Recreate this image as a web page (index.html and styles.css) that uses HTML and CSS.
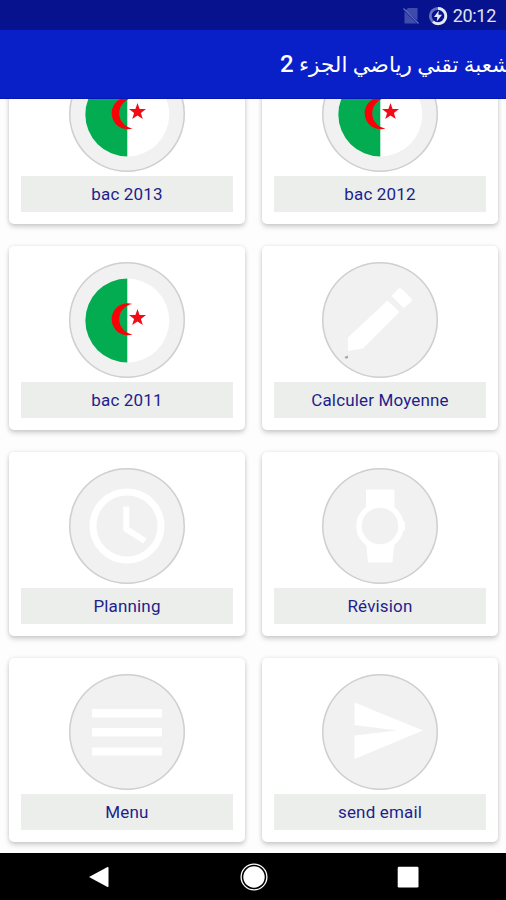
FILE: index.html
```
<!DOCTYPE html>
<html lang="fr">
<head>
<meta charset="utf-8">
<title>Bac</title>
<link rel="stylesheet" href="styles.css">
</head>
<body>
<svg class="defs" width="0" height="0">
  <symbol id="flag" viewBox="0 0 116 116">
    <circle cx="58.3" cy="58.500" r="42" fill="#fff"/>
    <path d="M58.3 16.500a42 42 0 0 0 0 84z" fill="#04ac51"/>
    <path d="M63.5 42a16 16 0 1 0 0 30.5a15.4 15.4 0 0 1 0-30.5z" fill="#fb0007"/>
    <path d="M68.5 47l2.100 6 6.400.1-5.100 3.900 1.900 6.100-5.300-3.600-5.300 3.600 1.900-6.100-5.100-3.900 6.400-.1z" fill="#f10b17"/>
  </symbol>
</svg>
<div class="screen">
  <div class="status">
    <svg class="nosim" width="17" height="18" viewBox="0 0 17 18">
      <path d="M5 1h9.500v12.500L2.500 3.500zM1.500 4.500L14 16.500H1.500z" fill="#3f4cab"/>
      <path d="M.5 1.500L15.500 16.500" stroke="#626ebd" stroke-width="1.300"/>
    </svg>
    <svg class="battery" width="20" height="20" viewBox="0 0 20 20" fill="none">
      <circle cx="10" cy="10" r="7.700" stroke="#6671bd" stroke-width="2.800"/>
      <path d="M10 2.300a7.700 7.700 0 1 1-5 13.500" stroke="#e7e9f6" stroke-width="2.800"/>
      <path d="M10.800 4.500L6 11h3.300L8.800 15.500 14 8.800h-3.600z" fill="#e7e9f6"/>
    </svg>
    <span class="clock">20:12</span>
  </div>
  <header class="appbar"><span class="title" lang="ar">شعبة تقني رياضي الجزء <span class="part">2</span></span></header>
  <main class="content">
    <div class="grid">
      <div class="card"><div class="disc"><svg><use href="#flag"/></svg></div><div class="label">bac 2013</div></div>
      <div class="card"><div class="disc"><svg><use href="#flag"/></svg></div><div class="label">bac 2012</div></div>
      <div class="card"><div class="disc"><svg><use href="#flag"/></svg></div><div class="label">bac 2011</div></div>
      <div class="card"><div class="disc"><svg viewBox="0 0 116 116" fill="#fff">
        <path d="M26 89V75.500L65.500 38.500 77.500 50 41 86.500zM69.500 34L76 27q2-1.500 4 0l9 9q1.500 2 0 4l-7.500 6z"/>
        <path d="M22.500 95l3-1.500.7 2.500-2.200.8z" fill="#a5a5a5"/>
      </svg></div><div class="label">Calculer Moyenne</div></div>
      <div class="card"><div class="disc"><svg viewBox="0 0 116 116" fill="none" stroke="#fff">
        <circle cx="58" cy="58" r="34" stroke-width="7"/>
        <path d="M57.300 38.500V61L76 73" stroke-width="6"/>
      </svg></div><div class="label">Planning</div></div>
      <div class="card"><div class="disc"><svg viewBox="0 0 116 116">
        <path d="M44 21.500h28.500V42h-28.500zM44 74h28.500l-2 20.500H46z" fill="#fff"/>
        <circle cx="58" cy="58" r="21" fill="#f1f1f1" stroke="#fff" stroke-width="5.500"/>
        <path d="M80.500 52.500l2.500 2v7l-2.500 2z" fill="#fff"/>
      </svg></div><div class="label">Révision</div></div>
      <div class="card"><div class="disc"><svg viewBox="0 0 116 116" fill="#fff">
        <rect x="23" y="35" width="70" height="8.500" rx="1"/>
        <rect x="23" y="54" width="70" height="8.500" rx="1"/>
        <rect x="23" y="73.500" width="70" height="8" rx="1"/>
      </svg></div><div class="label">Menu</div></div>
      <div class="card"><div class="disc"><svg viewBox="0 0 116 116" fill="#fff">
        <path d="M32.500 28.500L101 56.500 32.500 85V61.500L75 56.500 32.500 51z"/>
      </svg></div><div class="label">send email</div></div>
    </div>
  </main>
  <nav class="navbar">
    <svg viewBox="0 0 24 24"><path d="M2 12L20.500 2q1-.4 1 .7v18.600q0 1.100-1 .7z"/></svg>
    <svg class="home" viewBox="0 0 28 28"><circle cx="14" cy="14" r="10.700"/><circle cx="14" cy="14" r="12.900" fill="none" stroke="#fff" stroke-width="1.300"/></svg>
    <svg viewBox="0 0 24 24"><rect x="1.700" y="1.700" width="20.800" height="20.800" rx="1.300"/></svg>
  </nav>
</div>
</body>
</html>
```

FILE: styles.css
```
* { box-sizing: border-box; }
body { margin: 0; font-family: Roboto, sans-serif; }
.defs { display: none; }
.screen { width: 506px; height: 900px; display: flex; flex-direction: column; overflow: hidden; background: #fdfdfd; }
.status { height: 30px; flex: none; background: #06128e; display: flex; align-items: center; justify-content: flex-end; padding: 2px 10px 0 0; }
.nosim { margin-right: 8px; }
.battery { margin-right: 5px; }
.clock { color: #e0e3f3; font-size: 18px; line-height: 20px; font-weight: 400; letter-spacing: -.3px; }
.appbar { height: 69px; flex: none; background: #0920c9; padding-left: 280px; overflow: hidden; display: flex; align-items: center; border-bottom: 1px solid #0516b4; }
.title { direction: rtl; flex: none; white-space: nowrap; color: #fff; font-family: Roboto, "DejaVu Sans", sans-serif; font-weight: 500; font-size: 21.5px; line-height: 34px; }
.part { font-size: 24px; }
.content { flex: 1; min-height: 0; overflow: hidden; }
.grid { margin-top: -59px; padding: 0 8px 0 9px; display: grid; grid-template-columns: 236px 236px; column-gap: 17px; row-gap: 22px; }
.card { height: 184px; border-radius: 5px; background: #fff; box-shadow: 0 3px 5px rgba(0,0,0,.17), 0 0 4px rgba(0,0,0,.09); padding: 16px 12px 12px; display: flex; flex-direction: column; align-items: center; }
.disc { width: 116px; height: 116px; flex: none; border-radius: 50%; background: #f1f1f1; box-shadow: inset 0 0 0 1.5px #cfcfcf; }
.disc svg { display: block; width: 116px; height: 116px; }
.label { margin-top: 4px; width: 212px; height: 36px; background: #ebeeeb; color: #1e1e8c; font-size: 17px; line-height: 37px; text-align: center; letter-spacing: .16px; }
.navbar { height: 47px; flex: none; background: #000; display: flex; align-items: center; justify-content: space-between; padding: 1px 86px 0 87px; }
.navbar svg { width: 24px; height: 24px; fill: #fff; }
.navbar .home { width: 28px; height: 28px; }
```
